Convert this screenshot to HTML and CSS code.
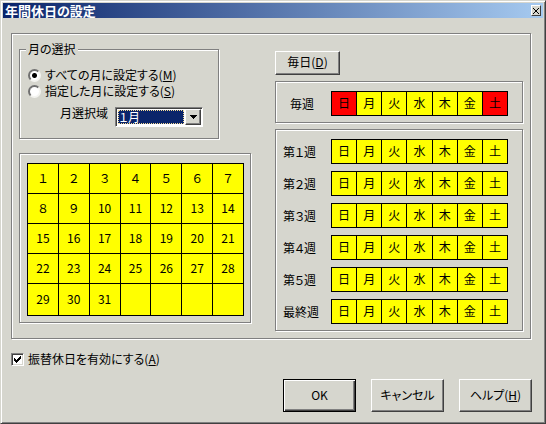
FILE: index.html
```html
<!DOCTYPE html>
<html lang="ja">
<head>
    <meta charset="utf-8">
    <title>年間休日の設定</title>
    <link rel="stylesheet" href="styles.css">
</head>
<body>
    <form class="window">
        <header class="titlebar">
            <h1>年間休日の設定</h1>
            <button type="button" class="close" aria-label="閉じる">
                <svg width="6" height="6" viewBox="0 0 6 6" shape-rendering="crispEdges"><path d="M0 0h1v1h1v1h2v-1h1v-1h1v1h-1v1h-1v2h1v1h1v1h-1v-1h-1v-1h-2v1h-1v1h-1v-1h1v-1h1v-2h-1v-1h-1z"/></svg>
            </button>
        </header>

        <main class="panel etched">
            <div class="left">
                <fieldset class="month etched">
                    <legend>月の選択</legend>
                    <label class="option"><input type="radio" name="scope" accesskey="m" checked><span>すべての月に設定する(<u>M</u>)</span></label>
                    <label class="option"><input type="radio" name="scope" accesskey="s"><span>指定した月に設定する(<u>S</u>)</span></label>
                    <div class="month_row">
                        <label for="month">月選択域</label>
                        <div class="combo">
                            <select id="month">
                                <option>１月</option>
                                <option>２月</option>
                                <option>３月</option>
                                <option>４月</option>
                                <option>５月</option>
                                <option>６月</option>
                                <option>７月</option>
                                <option>８月</option>
                                <option>９月</option>
                                <option>10月</option>
                                <option>11月</option>
                                <option>12月</option>
                            </select>
                            <span class="arrow"><svg width="7" height="4" viewBox="0 0 7 4" shape-rendering="crispEdges"><path d="M0 0h7v1h-1v1h-1v1h-1v1h-1v-1h-1v-1h-1v-1h-1z"/></svg></span>
                        </div>
                    </div>
                </fieldset>

                <div class="calendar etched">
                    <table>
                        <tr><td>１</td><td>２</td><td>３</td><td>４</td><td>５</td><td>６</td><td>７</td></tr>
                        <tr><td>８</td><td>９</td><td>10</td><td>11</td><td>12</td><td>13</td><td>14</td></tr>
                        <tr><td>15</td><td>16</td><td>17</td><td>18</td><td>19</td><td>20</td><td>21</td></tr>
                        <tr><td>22</td><td>23</td><td>24</td><td>25</td><td>26</td><td>27</td><td>28</td></tr>
                        <tr><td>29</td><td>30</td><td>31</td><td></td><td></td><td></td><td></td></tr>
                    </table>
                </div>
            </div>

            <div class="right">
                <button type="button" class="btn everyday" accesskey="d">毎日(<u>D</u>)</button>

                <div class="weeks etched">
                    <div class="week">
                        <span class="name every">毎週</span>
                        <div class="days"><button type="button" class="off">日</button><button type="button">月</button><button type="button">火</button><button type="button">水</button><button type="button">木</button><button type="button">金</button><button type="button" class="off">土</button></div>
                    </div>
                </div>

                <div class="weeks etched">
                    <div class="week">
                        <span class="name">第１週</span>
                        <div class="days"><button type="button">日</button><button type="button">月</button><button type="button">火</button><button type="button">水</button><button type="button">木</button><button type="button">金</button><button type="button">土</button></div>
                    </div>
                    <div class="week">
                        <span class="name">第２週</span>
                        <div class="days"><button type="button">日</button><button type="button">月</button><button type="button">火</button><button type="button">水</button><button type="button">木</button><button type="button">金</button><button type="button">土</button></div>
                    </div>
                    <div class="week">
                        <span class="name">第３週</span>
                        <div class="days"><button type="button">日</button><button type="button">月</button><button type="button">火</button><button type="button">水</button><button type="button">木</button><button type="button">金</button><button type="button">土</button></div>
                    </div>
                    <div class="week">
                        <span class="name">第４週</span>
                        <div class="days"><button type="button">日</button><button type="button">月</button><button type="button">火</button><button type="button">水</button><button type="button">木</button><button type="button">金</button><button type="button">土</button></div>
                    </div>
                    <div class="week">
                        <span class="name">第５週</span>
                        <div class="days"><button type="button">日</button><button type="button">月</button><button type="button">火</button><button type="button">水</button><button type="button">木</button><button type="button">金</button><button type="button">土</button></div>
                    </div>
                    <div class="week">
                        <span class="name">最終週</span>
                        <div class="days"><button type="button">日</button><button type="button">月</button><button type="button">火</button><button type="button">水</button><button type="button">木</button><button type="button">金</button><button type="button">土</button></div>
                    </div>
                </div>
            </div>
        </main>

        <label class="option transfer">
            <span class="check">
                <input type="checkbox" accesskey="a" checked>
                <svg width="7" height="7" viewBox="0 0 7 7" shape-rendering="crispEdges"><path d="M0 2h1v1h1v1h1v-1h1v-1h1v-1h1v-1h1v3h-1v1h-1v1h-1v1h-1v1h-1v-1h-1v-1h-1z"/></svg>
            </span>
            <span>振替休日を有効にする(<u>A</u>)</span>
        </label>

        <footer class="actions">
            <button type="submit" class="btn default">OK</button>
            <button type="button" class="btn">キャンセル</button>
            <button type="button" class="btn" accesskey="h">ヘルプ(<u>H</u>)</button>
        </footer>
    </form>
</body>
</html>
```

FILE: styles.css
```css
* {
    box-sizing: border-box;
}

body {
    margin: 0;
    background: #d6d6ce;
    color: #000;
    font-family: "Noto Sans CJK JP", sans-serif;
    font-size: 12px;
    line-height: 16px;
    font-feature-settings: "palt";
}

button,
select {
    font: inherit;
    font-feature-settings: inherit;
    color: inherit;
    margin: 0;
    padding: 0;
    border-radius: 0;
}

u {
    text-underline-offset: 1px;
}

.window {
    display: flex;
    flex-direction: column;
    min-height: 100vh;
    padding: 1px;
    border: 1px solid;
    border-color: #d6d6ce #404040 #404040 #d6d6ce;
    box-shadow: inset 1px 1px 0 #fff, inset -1px -1px 0 #808080;
}

.titlebar {
    display: flex;
    align-items: center;
    justify-content: space-between;
    height: 15px;
    margin: 1px 1px 0;
    padding: 0 2px;
    background: linear-gradient(to right, #0a246a, #a6caf0);
    color: #fff;
}

.titlebar h1 {
    margin: 0;
    font-size: 13px;
    line-height: 15px;
}

.close {
    display: flex;
    align-items: center;
    justify-content: center;
    width: 10px;
    height: 11px;
    border: 1px solid;
    border-color: #fff #404040 #404040 #fff;
    background: #d6d6ce;
}

/* double line: grey with a white one down and to the right */
.etched {
    border: 1px solid #808080;
    box-shadow: 1px 1px 0 #fff, inset 1px 1px 0 #fff;
}

.panel {
    display: grid;
    grid-template-columns: 29fr 31fr;
    gap: 24px;
    margin: 15px 13px 0 9px;
    padding: 7px;
}

.month {
    margin: 0 32px 14px 0;
    padding: 10px 8px 11px;
}

.month legend {
    margin-left: -2px;
    padding: 0 2px;
    background: #d6d6ce;
}

.option {
    display: flex;
    align-items: center;
    gap: 4px;
}

.option input {
    appearance: none;
    flex: none;
    width: 13px;
    height: 13px;
    margin: 0;
    background: #fff;
}

.option input[type="radio"] {
    border: 2px solid;
    border-color: #707070 #f4f4f0 #f4f4f0 #707070;
    border-radius: 50%;
}

.option input[type="radio"]:checked {
    background: radial-gradient(circle, #000 2px, #fff 3px);
}

.month_row {
    display: flex;
    justify-content: space-between;
    margin: 8px 7px 0 32px;
}

.month_row label {
    line-height: 12px;
}

.combo {
    display: flex;
    width: 88px;
    height: 20px;
    padding: 1px;
    border: 1px solid;
    border-color: #808080 #fff #fff #808080;
    box-shadow: inset 1px 1px 0 #404040;
    background: #fff;
}

.combo select {
    appearance: none;
    flex: 1;
    min-width: 0;
    margin: 1px;
    border: 1px dotted #f5db95;
    background: #0a246a;
    color: #fff;
    line-height: 12px;
}

.arrow {
    display: flex;
    align-items: center;
    justify-content: center;
    width: 16px;
    border: 1px solid;
    border-color: #fff #404040 #404040 #fff;
    box-shadow: inset -1px -1px 0 #808080;
    background: #d6d6ce;
}

.calendar {
    padding: 9px 6px 6px 7px;
}

.calendar table {
    width: 100%;
    table-layout: fixed;
    border-collapse: collapse;
    background: #ff0;
}

.calendar td {
    height: 30px;
    padding: 0 0 2px;
    border: 1px solid #000;
    text-align: center;
}

.calendar tr:last-child td {
    height: 32px;
}

.right {
    display: flex;
    flex-direction: column;
    gap: 6px;
    padding-top: 10px;
}

.btn {
    width: 73px;
    height: 33px;
    padding-bottom: 2px;
    border: 1px solid;
    border-color: #fff #404040 #404040 #fff;
    box-shadow: inset -1px -1px 0 #808080;
    background: #d6d6ce;
}

.btn.default {
    border-color: #000;
    box-shadow: inset 1px 1px 0 #fff, inset -1px -1px 0 #404040, inset -2px -2px 0 #808080;
}

.btn.everyday {
    width: 65px;
    height: 24px;
}

.weeks {
    display: grid;
    gap: 7px;
    padding: 9px 14px 6px 7px;
}

.week {
    display: flex;
    align-items: center;
}

.name {
    width: 48px;
}

.name.every {
    padding-left: 7px;
}

.days {
    display: flex;
    flex: 1;
    height: 25px;
    border: 1px solid #000;
}

.days button {
    flex: 1;
    padding-bottom: 2px;
    border: 0;
    border-right: 1px solid #000;
    background: #ff0;
}

.days button:last-child {
    border-right: 0;
}

.days .off {
    background: #f00;
}

.transfer {
    align-self: flex-start;
    margin: 12px 0 0 9px;
}

.check {
    position: relative;
    display: flex;
}

.check input {
    border: 1px solid;
    border-color: #808080 #fff #fff #808080;
    box-shadow: inset 1px 1px 0 #404040, inset -1px -1px 0 #d6d6ce;
}

.check svg {
    position: absolute;
    top: 3px;
    left: 3px;
    pointer-events: none;
}

.check input:not(:checked) + svg {
    display: none;
}

.actions {
    display: flex;
    justify-content: flex-end;
    gap: 15px;
    margin: 12px 12px 10px;
}
```
